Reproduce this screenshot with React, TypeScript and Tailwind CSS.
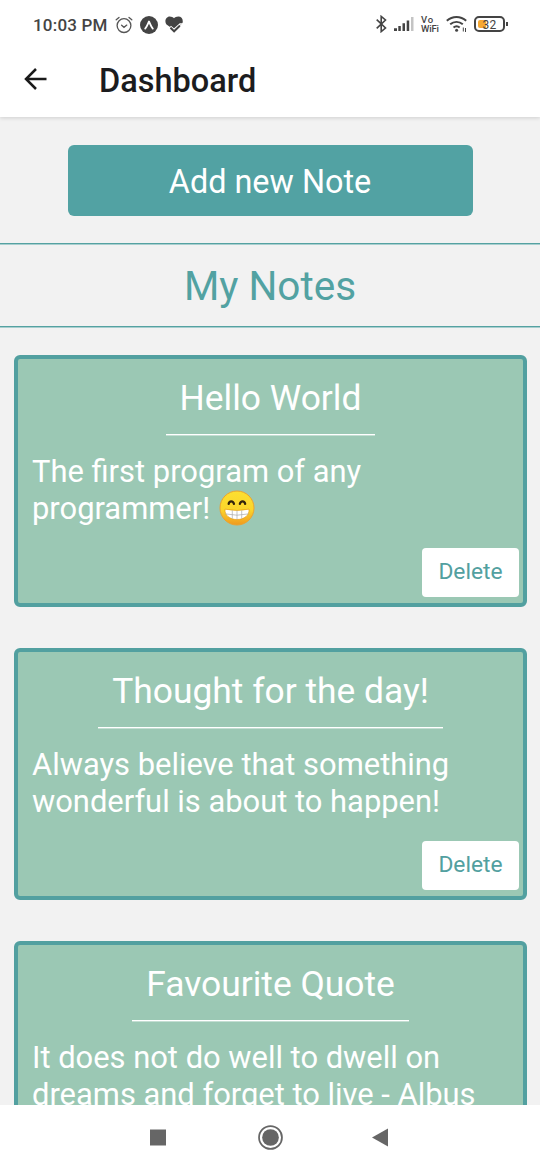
import type { ReactNode } from "react";

const FONT = "font-['Roboto','Noto_Sans',sans-serif]";

function GrinEmoji() {
  return (
    <svg
      role="img"
      aria-label="beaming face with smiling eyes"
      viewBox="0 0 36 36"
      className="-my-2 ml-px inline-block h-9 w-9 align-[1px]"
    >
      <defs>
        <linearGradient id="face" x1="0" y1="0" x2="0" y2="1">
          <stop offset="0" stopColor="#fde030" />
          <stop offset="0.55" stopColor="#fbd52b" />
          <stop offset="1" stopColor="#f09a1e" />
        </linearGradient>
      </defs>
      <circle cx="18" cy="18" r="17" fill="url(#face)" stroke="#eba32f" strokeWidth="1" />
      <path d="M9.600 14c.6-3.600 4.600-3.600 5.400 0M20.800 14c.8-3.600 4.800-3.600 5.400 0" fill="none" stroke="#33240c" strokeWidth="2.200" strokeLinecap="round" />
      <path d="M6 19.200q12 2.600 24 0c.6 6-4.800 10.300-12 10.300S5.400 25.200 6 19.200z" fill="#fff" stroke="#e59600" strokeWidth=".6" />
      <path d="M6.400 23.900q11.600 2.600 23.200 0M13.300 20.300v8.400M18 20.500v9M22.700 20.300v8.400" fill="none" stroke="#a9a9a9" strokeWidth=".7" />
    </svg>
  );
}

function StatusBar() {
  return (
    <div className="flex h-12 items-center justify-between pr-[32px] pl-[33px] text-[#444]">
      <div className="flex items-center pt-px">
        <span className="w-[82px] text-[17px] leading-5 font-medium tracking-[0.2px] whitespace-nowrap">10:03 PM</span>
        <svg viewBox="0 0 18 18" className="h-[18px] w-[18px]" fill="none" stroke="#555" strokeWidth="1.3" strokeLinecap="round">
          <circle cx="9" cy="9.600" r="6.900" />
          <path d="M1.200 3.800 4 1.400M16.800 3.800 14 1.400M6.600 9.200 9 11.300l2.800-2.200" />
        </svg>
        <svg viewBox="0 0 18 18" className="ml-[7px] h-[18px] w-[18px]">
          <circle cx="9" cy="9" r="9" fill="#444" />
          <path d="M5.200 12.600C7 10.700 8 7.500 9 5.500c1 2 2 5.200 3.800 7.100" fill="none" stroke="#fff" strokeWidth="1.800" strokeLinecap="round" strokeLinejoin="round" />
        </svg>
        <svg viewBox="0 0 18 18" className="ml-[7px] h-[18px] w-[18px]">
          <path d="M4.700 .5C6.500.5 8 1.200 9 2.300c1-1.100 2.500-1.800 4.300-1.800C17 .5 19 4.500 17 8L9.300 14 1.500 8.500C-1 5.500 1 .5 4.700.5z" fill="#444" />
          <path d="m5.500 10.200 3.500 3 6-5.200h3" fill="none" stroke="#fff" strokeWidth="1.400" />
          <path d="m5.500 11.800 3.600 3.600 5.700-5.600" fill="none" stroke="#444" strokeWidth="2" />
        </svg>
      </div>
      <div className="flex items-center">
        <svg viewBox="0 0 11 18" className="h-[18px] w-[11px]" fill="none" stroke="#444" strokeWidth="1.600">
          <path d="M.7 4.700 9.500 13 5.200 16.600V1.400L9.500 5 .7 13.300" />
        </svg>
        <svg viewBox="0 0 20 16" className="ml-[7px] h-4 w-5" fill="#444">
          <path d="M0 12.300h3V15H0zM4.300 10h2.500v5H4.300zM8.500 7.300H11V15H8.500zM12.700 4.500h2.500V15h-2.500z" />
          <path d="M17 1h2.500v14H17z" fill="#c4c4c4" />
        </svg>
        <div className="ml-[7px] flex w-[19px] flex-col text-[9.500px] leading-[9px] font-medium whitespace-nowrap">
          <span className="tracking-[0.800px]">Vo</span>
          <span className="tracking-[-0.200px]">WiFi</span>
        </div>
        <svg viewBox="0 0 22 18" className="ml-[6px] h-[18px] w-[22px]" fill="none" stroke="#444" strokeWidth="2">
          <path d="M.8 5.800C6.500.8 14.500.8 20.200 5.800M4.200 9.300c3.800-3.200 8.800-3.200 12.600 0M7.500 12.600c2-1.700 4.200-1.700 6.200 0" />
          <circle cx="10.600" cy="15.200" r="1.500" fill="#444" stroke="none" />
          <path d="M17.300 12.500v4M19.500 13v4" strokeWidth="1" />
        </svg>
        <div className="ml-[6px] flex items-center">
          <div className="relative flex h-[16px] w-[31px] items-center justify-center rounded-[5px] border-2 border-[#444] text-[12px] leading-none">
            <span className="absolute top-[2px] left-[2px] h-2 w-[8px] rounded-l-[2px] bg-[#f6a832]" />
            <span className="relative top-px tracking-[0.200px]">32</span>
          </div>
          <span className="ml-px h-1 w-[2px] bg-[#444]" />
        </div>
      </div>
    </div>
  );
}

function NoteCard({ title, children }: { title: string; children: ReactNode }) {
  return (
    <article className="flex h-[252px] flex-none flex-col rounded-[6px] border-4 border-[#52a0a0] bg-[#9bc8b4]">
      <h2 className="mx-auto h-[76px] border-b border-white px-[14px] pt-[18px] text-[35.400px] leading-[42px] whitespace-nowrap text-white shadow-[0_1px_0_rgba(255,255,255,0.4)]">
        {title}
      </h2>
      <p className="mt-[18px] pl-[14px] text-[30.900px] leading-[37px] whitespace-nowrap text-white">{children}</p>
      <button className="mt-auto mr-1 mb-[6px] ml-auto h-[49px] w-[97px] rounded-[4px] bg-white pb-[2px] text-[22.800px] leading-7 text-[#52a0a0]">
        Delete
      </button>
    </article>
  );
}

export default function App() {
  return (
    <div className={`flex h-[1170px] w-[540px] flex-col overflow-hidden bg-[#f2f2f2] ${FONT}`}>
      <div className="z-10 flex-none bg-white shadow-[0_1px_4px_rgba(0,0,0,0.15)]">
        <StatusBar />
        <header className="flex h-[69px] items-center pb-[4px] pl-[24px]">
          <svg viewBox="0 0 24 24" className="mb-[4px] h-6 w-6" fill="none" stroke="#1a1a1a" strokeWidth="2.500">
            <path d="M22.500 12H3M12 2 2 12l10 10" />
          </svg>
          <h1 className="ml-[51px] text-[32.500px] leading-9 font-medium text-[#1c1c1e]">Dashboard</h1>
        </header>
      </div>
      <main className="flex min-h-0 flex-1 flex-col overflow-hidden">
        <button className="mt-[27.500px] mr-auto ml-[67.500px] h-[71px] w-[405px] flex-none rounded-[6px] bg-[#52a2a3] pt-[3px] text-[32.400px] leading-10 text-white">
          Add new Note
        </button>
        <div className="mt-[27.500px] flex h-[84px] flex-none items-center justify-center border-y border-[#55a2a2] pt-px text-[40.500px] leading-[48px] text-[#52a2a2] shadow-[0_1px_0_#a9cfcf,inset_0_1px_0_#a9cfcf]">
          My Notes
        </div>
        <section className="flex flex-col gap-[41px] pt-[28px] pr-[13px] pl-[14px]">
          <NoteCard title="Hello World">
            The first program of any
            <br />
            programmer! <GrinEmoji />
          </NoteCard>
          <NoteCard title="Thought for the day!">
            Always believe that something
            <br />
            wonderful is about to happen!
          </NoteCard>
          <NoteCard title="Favourite Quote">
            It does not do well to dwell on
            <br />
            dreams and forget to live - Albus
          </NoteCard>
        </section>
      </main>
      <nav className="flex h-[65px] flex-none justify-between bg-white px-[150px] pt-[20px]">
        <svg viewBox="0 0 16 24" className="h-6 w-4"><path d="M0 4.500h16v16H0z" fill="#666" /></svg>
        <svg viewBox="0 0 24 24" className="ml-[2px] h-[25px] w-[25px]">
          <circle cx="12" cy="12" r="11" fill="none" stroke="#666" strokeWidth="1.700" />
          <circle cx="12" cy="12" r="8" fill="#666" />
        </svg>
        <svg viewBox="0 0 16 24" className="mr-[2px] h-6 w-4"><path d="M0 12.500 16 3.500v18z" fill="#666" /></svg>
      </nav>
    </div>
  );
}
